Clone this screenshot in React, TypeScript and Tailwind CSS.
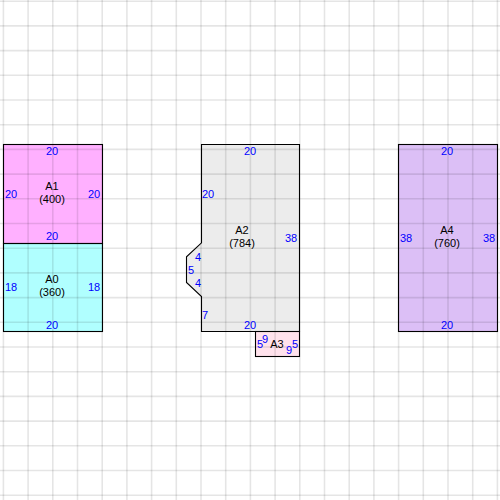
const gridX = Array.from({ length: 21 }, (_, i) => 3.4 + 24.7 * i);
const gridY = Array.from({ length: 21 }, (_, i) => 1.2 + 24.7 * i);

type Label = { x: number; y: number; t: string; t2?: string; blue?: boolean };

const labels: Label[] = [
  { x: 52, y: 151, t: "20", blue: true },
  { x: 11, y: 194, t: "20", blue: true },
  { x: 94, y: 194, t: "20", blue: true },
  { x: 52, y: 236, t: "20", blue: true },
  { x: 11, y: 287, t: "18", blue: true },
  { x: 94, y: 287, t: "18", blue: true },
  { x: 52, y: 325, t: "20", blue: true },
  { x: 52, y: 193, t: "A1", t2: "(400)" },
  { x: 52, y: 286, t: "A0", t2: "(360)" },
  { x: 250, y: 151, t: "20", blue: true },
  { x: 208, y: 194, t: "20", blue: true },
  { x: 291, y: 238, t: "38", blue: true },
  { x: 198, y: 257, t: "4", blue: true },
  { x: 191, y: 270, t: "5", blue: true },
  { x: 198, y: 283, t: "4", blue: true },
  { x: 205, y: 315, t: "7", blue: true },
  { x: 250, y: 325, t: "20", blue: true },
  { x: 242, y: 237, t: "A2", t2: "(784)" },
  { x: 277, y: 344, t: "A3" },
  { x: 260, y: 344, t: "5", blue: true },
  { x: 265, y: 339, t: "9", blue: true },
  { x: 289, y: 350, t: "9", blue: true },
  { x: 295, y: 344, t: "5", blue: true },
  { x: 447, y: 151, t: "20", blue: true },
  { x: 406, y: 238, t: "38", blue: true },
  { x: 489, y: 238, t: "38", blue: true },
  { x: 447, y: 325, t: "20", blue: true },
  { x: 447, y: 237, t: "A4", t2: "(760)" },
];

const notch = "201.5,144.5 299.5,144.5 299.5,331.5 201.5,331.5 201.5,296.6 186.5,282.4 186.5,256.8 201.5,242.8";

export default function App() {
  return (
    <div className="relative h-[500px] w-[500px] overflow-hidden bg-white font-['Liberation_Sans',Arial,sans-serif] text-[11px] leading-[13px]">
      <svg width="500" height="500" viewBox="0 0 500 500" className="absolute left-0 top-0">
        <rect x="3.5" y="144.5" width="99" height="99" fill="#ffb0ff" />
        <rect x="3.5" y="243.5" width="99" height="88" fill="#b0ffff" />
        <polygon points={notch} fill="#ececec" />
        <rect x="255.5" y="331.5" width="44" height="25" fill="#ffe2ec" />
        <rect x="398.5" y="144.5" width="99" height="187" fill="#dcbff6" />
        {gridX.map((x) => (
          <line key={x} x1={x} x2={x} y1="0" y2="500" stroke="#000" strokeOpacity="0.1" strokeWidth="1.6" />
        ))}
        {gridY.map((y) => (
          <line key={y} y1={y} y2={y} x1="0" x2="500" stroke="#000" strokeOpacity="0.1" strokeWidth="1.6" />
        ))}
        <g fill="none" stroke="#000" strokeWidth="1.1">
          <rect x="3.5" y="144.5" width="99" height="99" />
          <rect x="3.5" y="243.5" width="99" height="88" />
          <polygon points={notch} />
          <rect x="255.5" y="331.5" width="44" height="25" />
          <rect x="398.5" y="144.5" width="99" height="187" />
        </g>
      </svg>
      {labels.map((l, i) => (
        <span
          key={i}
          className={`absolute -translate-x-1/2 -translate-y-1/2 whitespace-nowrap text-center ${l.blue ? "text-[#0000ff]" : "text-black"}`}
          style={{ left: l.x, top: l.y }}
        >
          {l.t}
          {l.t2 && <br />}
          {l.t2}
        </span>
      ))}
    </div>
  );
}
